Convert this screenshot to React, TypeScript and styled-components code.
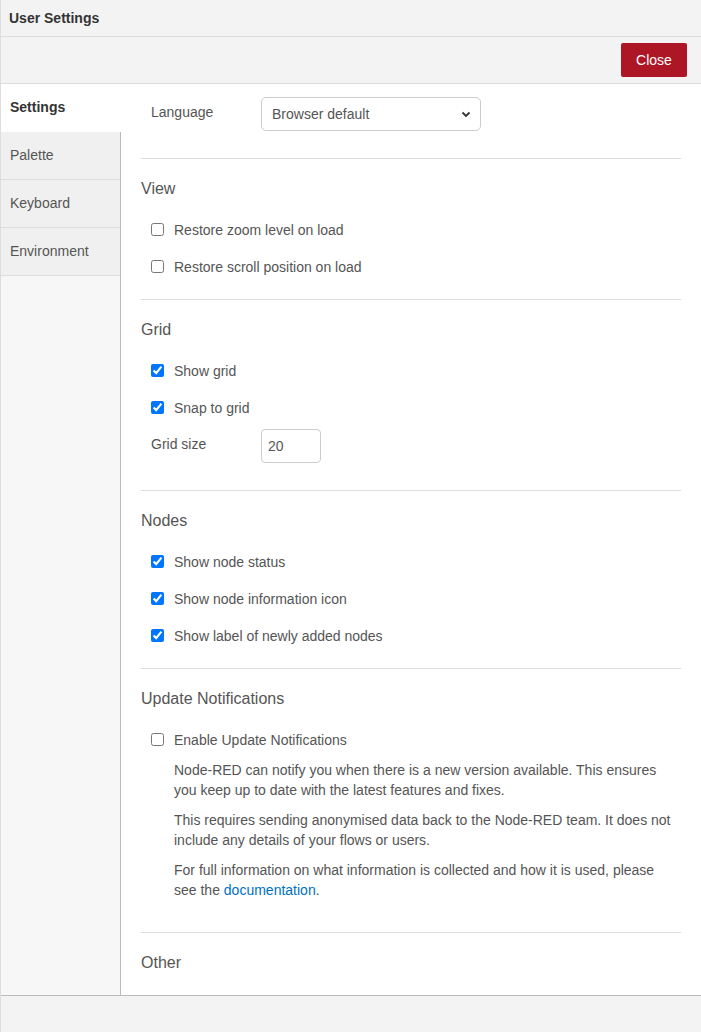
import React from "react";
import styled, { createGlobalStyle } from "styled-components";

const GlobalStyle = createGlobalStyle`
  html, body {
    margin: 0;
    padding: 0;
    height: 100%;
    background: #fff;
  }
  body {
    font-family: "Liberation Sans", Arial, Helvetica, sans-serif;
    font-size: 14px;
    color: #555;
  }
  #root {
    height: 100%;
  }
`;

const Tray = styled.div`
  height: 1032px;
  display: flex;
  flex-direction: column;
  border-left: 1px solid #ddd;
  box-sizing: border-box;
`;

const Header = styled.div`
  height: 36px;
  flex: none;
  background: #f3f3f3;
  border-bottom: 1px solid #ddd;
  display: flex;
  align-items: center;
  padding-left: 8px;
  font-weight: bold;
  font-size: 14px;
  color: #333;
`;

const Toolbar = styled.div`
  height: 46px;
  flex: none;
  background: #f3f3f3;
  border-bottom: 1px solid #ddd;
  display: flex;
  align-items: center;
  justify-content: flex-end;
  padding-right: 14px;
`;

const CloseButton = styled.button`
  height: 34px;
  width: 66px;
  border: none;
  border-radius: 2px;
  background: #ad1625;
  color: #fff;
  font-family: inherit;
  font-size: 14px;
  cursor: pointer;
`;

const Body = styled.div`
  flex: 1;
  display: flex;
  min-height: 0;
  border-bottom: 1px solid #bbb;
`;

const Sidebar = styled.div`
  width: 119px;
  flex: none;
  background: #f7f7f7;
  border-right: 1px solid #bbb;
  display: flex;
  flex-direction: column;
`;

const Tab = styled.div<{ $active?: boolean }>`
  height: 48px;
  box-sizing: border-box;
  display: flex;
  align-items: center;
  padding-left: 9px;
  padding-bottom: ${(p) => (p.$active ? "2px" : "1px")};
  font-size: 14px;
  color: ${(p) => (p.$active ? "#333" : "#555")};
  font-weight: ${(p) => (p.$active ? "bold" : "normal")};
  background: ${(p) => (p.$active ? "#fff" : "#f0f0f0")};
  border-bottom: 1px solid ${(p) => (p.$active ? "#fff" : "#ddd")};
  margin-right: ${(p) => (p.$active ? "-1px" : "0")};
`;

const Content = styled.div`
  flex: 1;
  padding: 13px 20px 0 20px;
  overflow: hidden;
`;

const Row = styled.div<{ $gap?: number }>`
  display: flex;
  align-items: center;
  padding-left: 10px;
  height: 34px;
  margin-top: ${(p) => p.$gap ?? 0}px;
`;

const FieldLabel = styled.label`
  width: 110px;
  flex: none;
  margin-top: -4px;
`;

const Select = styled.div`
  width: 220px;
  height: 34px;
  box-sizing: border-box;
  border: 1px solid #ccc;
  border-radius: 5px;
  display: flex;
  align-items: center;
  justify-content: space-between;
  padding: 0 8px 0 10px;
  color: #555;
`;

const NumberBox = styled.div`
  width: 60px;
  height: 34px;
  box-sizing: border-box;
  border: 1px solid #ccc;
  border-radius: 4px;
  display: flex;
  align-items: center;
  padding-left: 6px;
  color: #555;
`;

const Rule = styled.hr<{ $gap?: number }>`
  border: none;
  border-top: 1px solid #ddd;
  height: 0;
  margin: ${(p) => p.$gap ?? 27}px 0 0 0;
`;

const Heading = styled.h3`
  font-size: 16px;
  font-weight: normal;
  color: #555;
  margin: 21px 0 13px 0;
  line-height: 18px;
`;

const CheckRow = styled.label`
  display: flex;
  align-items: center;
  height: 37px;
  padding-left: 10px;

  input {
    margin: 0 10px 0 0;
    width: 13px;
    height: 13px;
  }
`;

const Notes = styled.div`
  margin: 2px 8px 0 33px;
`;

const Note = styled.p`
  margin: 0 0 10px 0;
  line-height: 20px;
  color: #555;
`;

const Link = styled.a`
  color: #0070c0;
  text-decoration: none;
`;

const Footer = styled.div`
  height: 36px;
  flex: none;
  background: #f3f3f3;
`;

function Check({ label, checked }: { label: string; checked?: boolean }) {
  return (
    <CheckRow>
      <input type="checkbox" defaultChecked={checked} />
      {label}
    </CheckRow>
  );
}

export default function App() {
  return (
    <>
      <GlobalStyle />
      <Tray>
        <Header>User Settings</Header>
        <Toolbar>
          <CloseButton>Close</CloseButton>
        </Toolbar>
        <Body>
          <Sidebar>
            <Tab $active>Settings</Tab>
            <Tab>Palette</Tab>
            <Tab>Keyboard</Tab>
            <Tab>Environment</Tab>
          </Sidebar>
          <Content>
            <Row>
              <FieldLabel>Language</FieldLabel>
              <Select>
                Browser default
                <svg width="12" height="12" viewBox="0 0 12 12">
                  <path d="M2.5 4.5 L6 8 L9.5 4.5" fill="none" stroke="#333" strokeWidth="1.8" />
                </svg>
              </Select>
            </Row>
            <Rule />
            <Heading>View</Heading>
            <Check label="Restore zoom level on load" />
            <Check label="Restore scroll position on load" />
            <Rule $gap={14} />
            <Heading>Grid</Heading>
            <Check label="Show grid" checked />
            <Check label="Snap to grid" checked />
            <Row $gap={3}>
              <FieldLabel>Grid size</FieldLabel>
              <NumberBox>20</NumberBox>
            </Row>
            <Rule />
            <Heading>Nodes</Heading>
            <Check label="Show node status" checked />
            <Check label="Show node information icon" checked />
            <Check label="Show label of newly added nodes" checked />
            <Rule $gap={14} />
            <Heading>Update Notifications</Heading>
            <Check label="Enable Update Notifications" />
            <Notes>
              <Note>
                Node-RED can notify you when there is a new version available. This ensures you keep
                up to date with the latest features and fixes.
              </Note>
              <Note>
                This requires sending anonymised data back to the Node-RED team. It does not include
                any details of your flows or users.
              </Note>
              <Note>
                For full information on what information is collected and how it is used, please see
                the <Link href="#">documentation</Link>.
              </Note>
            </Notes>
            <Rule $gap={32} />
            <Heading>Other</Heading>
          </Content>
        </Body>
        <Footer />
      </Tray>
    </>
  );
}
